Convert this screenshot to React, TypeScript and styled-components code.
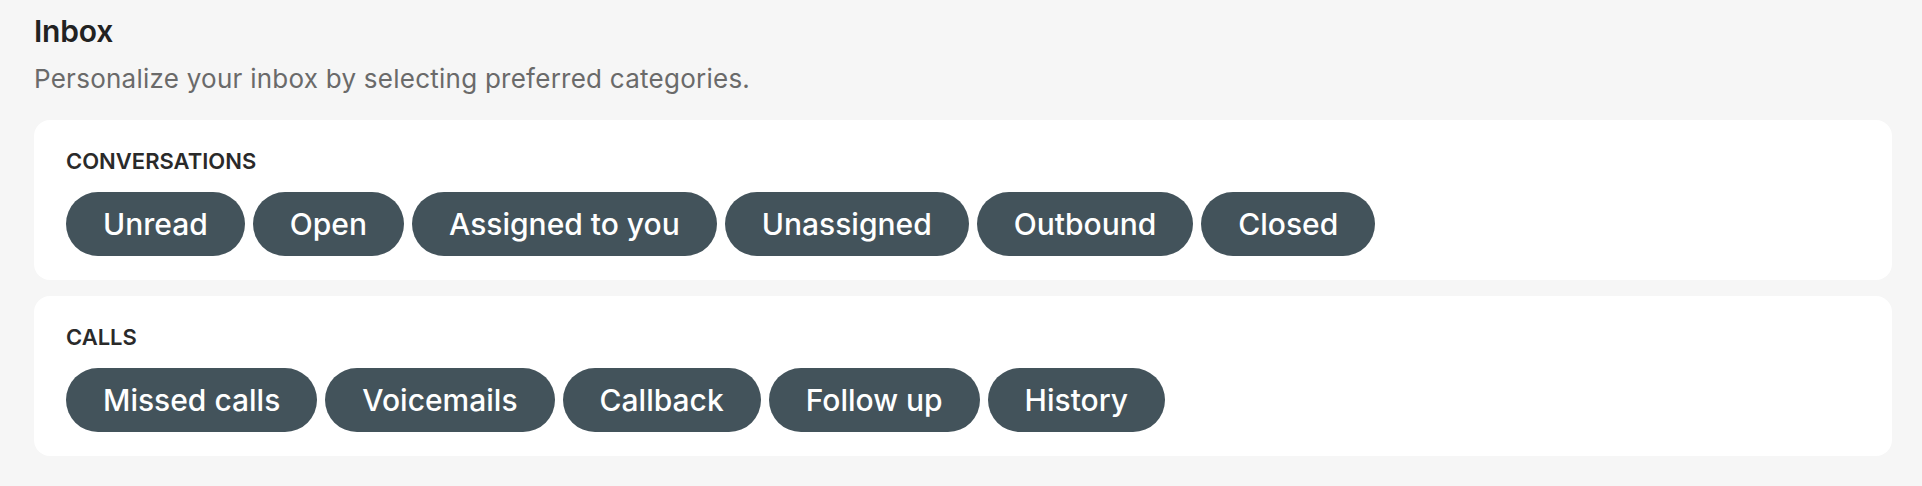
import React from "react";
import styled, { createGlobalStyle } from "styled-components";

const GlobalStyle = createGlobalStyle`
  html, body {
    margin: 0;
    padding: 0;
    background: #f6f6f6;
  }
  body {
    font-family: Inter, "Noto Sans", "Liberation Sans", sans-serif;
    -webkit-font-smoothing: antialiased;
  }
`;

const Page = styled.div`
  padding: 13px 30px 20px 34px;
  display: flex;
  flex-direction: column;
`;

const Title = styled.h1`
  margin: 0;
  font-size: 30px;
  line-height: 36px;
  font-weight: 600;
  color: #222222;
  letter-spacing: -0.2px;
`;

const Subtitle = styled.p`
  margin: 14px 0 0;
  font-size: 26px;
  line-height: 31px;
  font-weight: 400;
  color: #6a6a6a;
  letter-spacing: 0.25px;
`;

const Sections = styled.div`
  margin-top: 26px;
  display: flex;
  flex-direction: column;
  gap: 16px;
`;

const Card = styled.section`
  background: #ffffff;
  border-radius: 16px;
  padding: 28px 32px 24px;
  display: flex;
  flex-direction: column;
  gap: 18px;
`;

const Label = styled.h2`
  margin: 0;
  font-size: 22px;
  line-height: 26px;
  font-weight: 600;
  color: #2a2a2a;
  text-transform: uppercase;
`;

const ChipRow = styled.div`
  display: flex;
  flex-wrap: wrap;
  gap: 8px;
`;

const Chip = styled.button`
  display: inline-flex;
  align-items: center;
  justify-content: center;
  height: 64px;
  padding: 0 37px;
  border: none;
  border-radius: 32px;
  background: #43535b;
  color: #ffffff;
  font-family: inherit;
  font-size: 30px;
  font-weight: 500;
  cursor: pointer;
`;

const sections = [
  {
    title: "Conversations",
    items: ["Unread", "Open", "Assigned to you", "Unassigned", "Outbound", "Closed"],
  },
  {
    title: "Calls",
    items: ["Missed calls", "Voicemails", "Callback", "Follow up", "History"],
  },
];

export default function App() {
  return (
    <>
      <GlobalStyle />
      <Page>
        <Title>Inbox</Title>
        <Subtitle>Personalize your inbox by selecting preferred categories.</Subtitle>
        <Sections>
          {sections.map((s) => (
            <Card key={s.title}>
              <Label>{s.title}</Label>
              <ChipRow>
                {s.items.map((i) => (
                  <Chip key={i}>{i}</Chip>
                ))}
              </ChipRow>
            </Card>
          ))}
        </Sections>
      </Page>
    </>
  );
}
